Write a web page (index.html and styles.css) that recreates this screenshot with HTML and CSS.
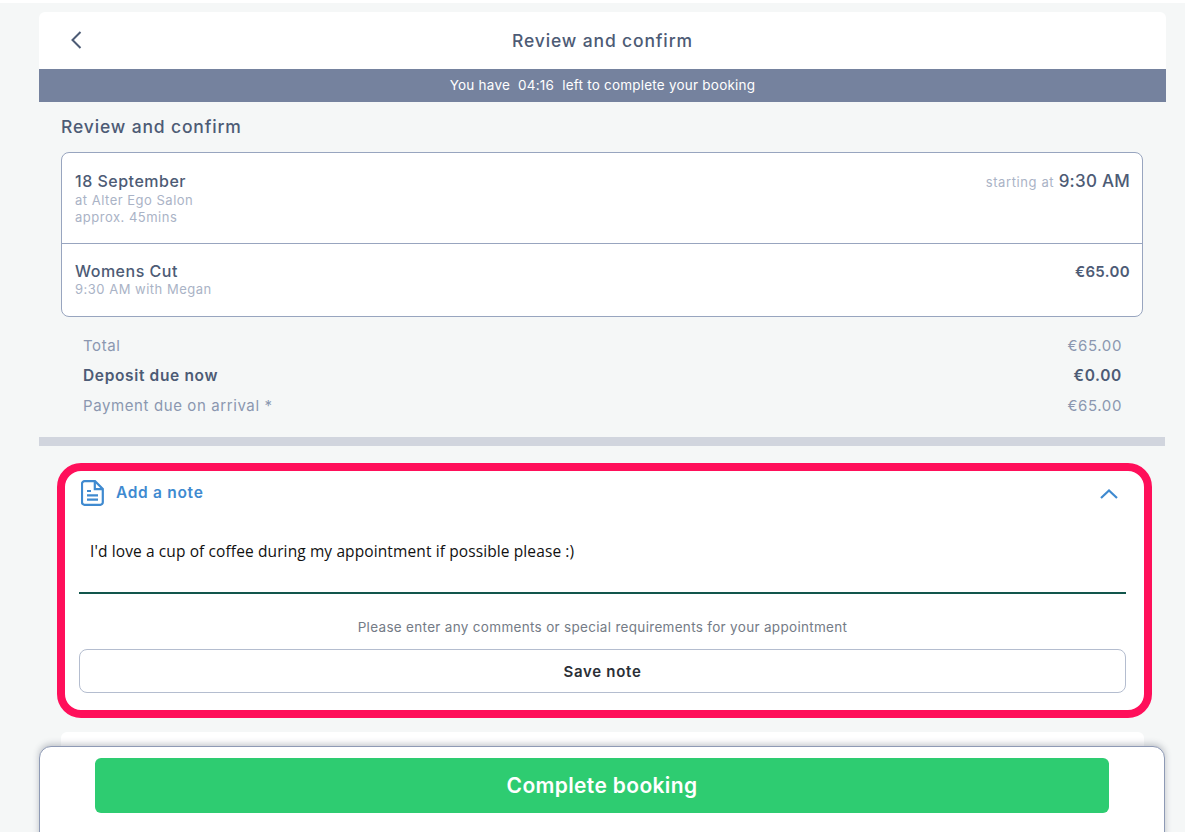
FILE: index.html
```html
<!DOCTYPE html>
<html lang="en">
<head>
<meta charset="utf-8">
<title>Review and confirm</title>
<link rel="stylesheet" href="styles.css">
</head>
<body>
<div class="page">
  <main class="shell">
    <header class="topbar">
      <button class="back" aria-label="Back">
        <svg width="12" height="18" viewBox="0 0 12 18"><path d="M10.500 1 2.500 9l8 8" fill="none" stroke="#4d5b75" stroke-width="2"/></svg>
      </button>
      <h1 class="topbar-title">Review and confirm</h1>
    </header>
    <div class="timer">You have&nbsp; 04:16 &nbsp;left to complete your booking</div>
    <section class="review">
      <h2 class="review-title">Review and confirm</h2>
      <div class="summary">
        <div class="summary-row summary-date">
          <div>
            <div class="strong">18 September</div>
            <div class="muted">at Alter Ego Salon</div>
            <div class="muted">approx. 45mins</div>
          </div>
          <div class="start"><span class="start-label">starting at</span> <span class="start-time">9:30 AM</span></div>
        </div>
        <div class="summary-row summary-service">
          <div>
            <div class="strong">Womens Cut</div>
            <div class="muted">9:30 AM with Megan</div>
          </div>
          <div class="price">€65.00</div>
        </div>
      </div>
      <div class="totals">
        <div class="total-row"><span>Total</span><span>€65.00</span></div>
        <div class="total-row total-bold"><span>Deposit due now</span><span>€0.00</span></div>
        <div class="total-row"><span>Payment due on arrival *</span><span>€65.00</span></div>
      </div>
    </section>
    <div class="band"></div>
    <section class="note">
      <div class="note-head">
        <svg class="note-icon" width="23" height="26" viewBox="0 0 23 26" fill="none" stroke="#3f8ad0" stroke-width="2.200"><path d="M3.500 1.200h10.500l7.800 7.800v13.300a2.500 2.500 0 0 1-2.500 2.500h-15.800a2.500 2.500 0 0 1-2.500-2.500v-18.600a2.500 2.500 0 0 1 2.500-2.500Z"/><path d="M13.800 1.500v7.700h8M6 11h4M6 15.300h11M6 19.600h11"/></svg>
        <span class="note-title">Add a note</span>
        <svg class="note-chevron" width="18" height="10" viewBox="0 0 18 10"><path d="M1 9l8-7.500L17 9" fill="none" stroke="#3f8ad0" stroke-width="2.200"/></svg>
      </div>
      <div class="note-text">I'd love a cup of coffee during my appointment if possible please :)</div>
      <p class="note-help">Please enter any comments or special requirements for your appointment</p>
      <button class="save">Save note</button>
    </section>
    <div class="next-card"></div>
  </main>
  <footer class="footer">
    <button class="complete">Complete booking</button>
  </footer>
</div>
</body>
</html>
```
FILE: styles.css
```css
* { box-sizing: border-box; }
html, body { margin: 0; height: 832px; overflow: hidden; background: #fff; }
body { font-family: Inter, "Liberation Sans", sans-serif; color: #4d5b75; }
button { font-family: inherit; cursor: pointer; }
h1, h2, p { margin: 0; }

.page { margin-top: 3px; height: 829px; padding: 9px 19px 0 39px; background: #f5f7f7; position: relative; overflow: hidden; }
.shell { width: 1127px; }

.topbar { height: 57px; background: #fff; border-radius: 6px 6px 0 0; display: flex; align-items: center; justify-content: center; position: relative; }
.back { position: absolute; left: 31px; top: 19px; padding: 0; border: 0; background: none; display: flex; }
.topbar-title { font-size: 17.500px; font-weight: 500; letter-spacing: 0.85px; color: #4d5b75; }

.timer { height: 33px; padding-bottom: 2px; background: #75829e; color: #fff; font-size: 13.500px; letter-spacing: 0.22px; display: flex; align-items: center; justify-content: center; white-space: pre; }

.review { width: 1126px; padding: 0 22px; }
.review-title { font-size: 17.500px; font-weight: 500; letter-spacing: 0.85px; line-height: 20px; padding-top: 15px; height: 50px; }
.summary { background: #fff; border: 1px solid #98a5bf; border-radius: 8px; height: 165px; }
.summary-row { display: flex; justify-content: space-between; padding: 0 12px 0 13px; }
.summary-date { height: 91px; padding-top: 17px; border-bottom: 1px solid #98a5bf; }
.summary-service { padding-top: 18px; }
.strong { font-size: 16px; font-weight: 500; letter-spacing: 0.5px; line-height: 20px; color: #4d5b75; }
.summary-date .strong { line-height: 22px; }
.summary-service .strong { line-height: 19px; }
.muted { font-size: 13px; letter-spacing: 0.5px; line-height: 17px; color: #aab3c6; }
.start { padding-top: 1px; line-height: 20px; }
.start-label { font-size: 13px; letter-spacing: 0.6px; color: #aab3c6; }
.start-time { font-size: 17px; font-weight: 500; letter-spacing: 0.25px; color: #4d5b75; }
.price { font-size: 15px; font-weight: 600; letter-spacing: 0.35px; line-height: 20px; }

.totals { padding: 14px 21px 0 22px; height: 120px; }
.total-row { display: flex; justify-content: space-between; height: 30px; line-height: 30px; font-size: 15px; letter-spacing: 0.6px; color: #8b97b0; }
.total-bold { font-size: 15.500px; font-weight: 600; letter-spacing: 0.65px; color: #4d5b75; }

.band { width: 1126px; height: 9px; background: #d1d5de; }

.note { width: 1095px; height: 255px; margin: 17px 0 0 18px; padding: 0 18px 0 14px; background: #fff; border: 8px solid #ff0f5a; border-radius: 24px; }
.note-head { display: flex; align-items: center; height: 43px; }
.note-icon { margin-left: 2px; flex: none; }
.note-title { margin-left: 12px; font-size: 15.500px; font-weight: 600; letter-spacing: 0.7px; color: #3f8ad0; }
.note-chevron { margin: 2px 8px 0 auto; }
.note-text { width: 1047px; height: 80px; padding: 26px 0 0 11px; border-bottom: 2px solid #12564c; font-family: "Open Sans", sans-serif; font-size: 15.500px; letter-spacing: 0.11px; line-height: 22px; color: #111; }
.note-help { width: 1047px; margin-top: 25px; text-align: center; font-size: 13.500px; letter-spacing: 0.31px; line-height: 17px; color: #747b86; }
.save { display: block; width: 1047px; height: 44px; margin-top: 13px; background: #fff; border: 1px solid #b4bdcf; border-radius: 8px; font-size: 15px; font-weight: 600; letter-spacing: 0.7px; color: #2b2f36; }

.next-card { width: 1083px; height: 100px; margin: 14px 0 0 22px; background: #fff; border-radius: 6px; }

.footer { position: absolute; left: 39px; top: 743px; width: 1126px; height: 100px; background: #fff; border: 1px solid #8e9ab5; border-radius: 12px 12px 0 0; box-shadow: 0 -2px 6px rgba(60, 70, 90, 0.3); padding: 11px 55px 0; }
.complete { display: block; width: 1014px; height: 55px; padding-bottom: 2px; border: 0; border-radius: 6px; background: #2ecc71; color: #fff; font-size: 21px; font-weight: 600; letter-spacing: 0.35px; }
```
